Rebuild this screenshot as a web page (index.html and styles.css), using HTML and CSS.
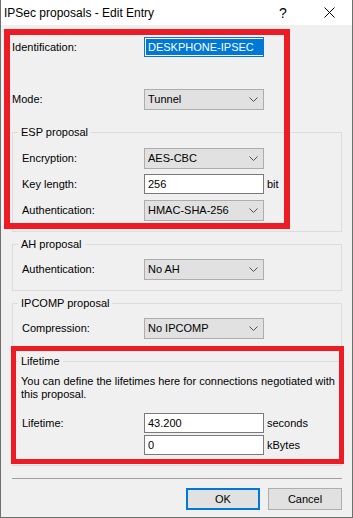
FILE: index.html
```html
<!DOCTYPE html>
<html lang="en">
<head>
  <meta charset="UTF-8">
  <title>IPSec proposals - Edit Entry</title>
  <link rel="stylesheet" href="styles.css">
</head>
<body>
  <div class="window">
    <!-- Barra de título -->
    <div class="titlebar">
      <span class="title">IPSec proposals - Edit Entry</span>
      <span class="tb-btn help">?</span>
      <span class="tb-btn close">
        <svg width="11" height="11" viewBox="0 0 11 11"><path d="M0.5 0.5 L10.5 10.5 M10.5 0.5 L0.5 10.5" stroke="#000" stroke-width="1" fill="none"/></svg>
      </span>
    </div>

    <div class="content">
      <div class="row row-ident">
        <span class="label wide">Identification:</span>
        <div class="edit focused"><span class="selected">DESKPHONE-IPSEC</span></div>
      </div>

      <div class="row row-mode">
        <span class="label wide">Mode:</span>
        <div class="combo">Tunnel<svg class="chev" width="9" height="5" viewBox="0 0 9 5"><path d="M0.5 0.5 L4.5 4.5 L8.5 0.5" stroke="#505050" fill="none"/></svg></div>
      </div>

      <!-- ESP -->
      <fieldset class="group esp">
        <legend>ESP proposal</legend>
        <div class="rows">
          <div class="row">
            <span class="label">Encryption:</span>
            <div class="combo">AES-CBC<svg class="chev" width="9" height="5" viewBox="0 0 9 5"><path d="M0.5 0.5 L4.5 4.5 L8.5 0.5" stroke="#505050" fill="none"/></svg></div>
          </div>
          <div class="row">
            <span class="label">Key length:</span>
            <div class="edit">256</div>
            <span class="unit">bit</span>
          </div>
          <div class="row">
            <span class="label">Authentication:</span>
            <div class="combo">HMAC-SHA-256<svg class="chev" width="9" height="5" viewBox="0 0 9 5"><path d="M0.5 0.5 L4.5 4.5 L8.5 0.5" stroke="#505050" fill="none"/></svg></div>
          </div>
        </div>
      </fieldset>

      <!-- AH -->
      <fieldset class="group">
        <legend>AH proposal</legend>
        <div class="rows">
          <div class="row">
            <span class="label">Authentication:</span>
            <div class="combo">No AH<svg class="chev" width="9" height="5" viewBox="0 0 9 5"><path d="M0.5 0.5 L4.5 4.5 L8.5 0.5" stroke="#505050" fill="none"/></svg></div>
          </div>
        </div>
      </fieldset>

      <!-- IPCOMP -->
      <fieldset class="group">
        <legend>IPCOMP proposal</legend>
        <div class="rows">
          <div class="row">
            <span class="label">Compression:</span>
            <div class="combo">No IPCOMP<svg class="chev" width="9" height="5" viewBox="0 0 9 5"><path d="M0.5 0.5 L4.5 4.5 L8.5 0.5" stroke="#505050" fill="none"/></svg></div>
          </div>
        </div>
      </fieldset>

      <!-- Lifetime -->
      <fieldset class="group lifetime">
        <legend>Lifetime</legend>
        <p class="note">You can define the lifetimes here for connections negotiated with this proposal.</p>
        <div class="rows tight">
          <div class="row">
            <span class="label">Lifetime:</span>
            <div class="edit">43.200</div>
            <span class="unit">seconds</span>
          </div>
          <div class="row">
            <span class="label"></span>
            <div class="edit">0</div>
            <span class="unit">kBytes</span>
          </div>
        </div>
      </fieldset>

      <div class="separator"></div>

      <div class="buttons">
        <button class="btn default">OK</button>
        <button class="btn">Cancel</button>
      </div>
    </div>

    <!-- marcas rojas encima del diálogo -->
    <div class="mark mark-top"></div>
    <div class="mark mark-bottom"></div>
  </div>
</body>
</html>
```

FILE: styles.css
```css
/* ----- GENERAL ----- */
body {
  margin: 0;
  font-family: "Liberation Sans", Arial, sans-serif;
  font-size: 11px;
  color: #000;
  background: #fff;
}

.window {
  position: relative;
  width: 353px;
  height: 518px;
  box-sizing: border-box;
  background: #f0f0f0;
  border: 1px solid #6f6f6f;
  border-top: 0;
  display: flex;
  flex-direction: column;
}

/* ----- TITLE BAR ----- */
.titlebar {
  height: 25px;
  background: #fff;
  display: flex;
  align-items: center;
  padding-left: 3px;
}

.title {
  flex: 1;
  font-size: 12px;
}

.tb-btn {
  width: 46px;
  height: 25px;
  display: flex;
  align-items: center;
  justify-content: center;
}

.help {
  font-size: 14px;
}

/* ----- CONTENT ----- */
.content {
  flex: 1;
  display: flex;
  flex-direction: column;
  padding: 12px 10px 0 11px;
}

.row {
  display: flex;
  align-items: flex-start;
  height: 21px;
}

.label {
  width: 122px;
  line-height: 21px;
  padding-left: 4px;
}

.label.wide {
  width: 132px;
  padding-left: 0;
}

.row-ident {
  height: 20px;
}

.row-ident .label {
  line-height: 20px;
}

.row-mode {
  margin-top: 32px;
}

.edit {
  width: 120px;
  height: 20px;
  box-sizing: border-box;
  border: 1px solid #7a7a7a;
  background: #fff;
  padding-left: 3px;
  line-height: 18px;
}

.edit.focused {
  border-color: #0078d7;
  padding-left: 1px;
  line-height: 16px;
  padding-top: 1px;
}

.selected {
  display: block;
  background: #0078d7;
  color: #fff;
  padding-left: 2px;
}

.combo {
  width: 120px;
  height: 21px;
  box-sizing: border-box;
  border: 1px solid #adadad;
  background: #e1e1e1;
  padding-left: 3px;
  padding-right: 5px;
  line-height: 19px;
  display: flex;
  justify-content: space-between;
  align-items: center;
}

.unit {
  line-height: 20px;
  padding-left: 3px;
}

/* ----- GROUP BOXES ----- */
.group {
  margin: 5px 0 0;
  border: 1px solid #dcdcdc;
  padding: 8px 0 10px 5px;
}

.group legend {
  padding: 0 3px;
  line-height: 14px;
}

.esp {
  margin-top: 15px;
  padding-top: 9px;
}

.rows {
  display: flex;
  flex-direction: column;
  gap: 5px;
}

.rows.tight {
  gap: 1px;
  margin-top: 12px;
}

.lifetime {
  margin-top: 4px;
  padding-top: 7px;
  padding-bottom: 9px;
}

.note {
  margin: 0;
  padding-left: 3px;
  line-height: 13px;
}

/* ----- BUTTONS ----- */
.separator {
  margin-top: 12px;
  height: 1px;
  background: #a0a0a0;
}

.buttons {
  display: flex;
  justify-content: flex-end;
  gap: 8px;
  margin-top: 9px;
}

.btn {
  width: 74px;
  height: 22px;
  box-sizing: border-box;
  border: 1px solid #adadad;
  background: #e1e1e1;
  font-family: inherit;
  font-size: 11px;
  padding: 0;
}

.btn.default {
  border: 2px solid #0078d7;
}

/* ----- RED MARKS ----- */
.mark {
  position: absolute;
  box-sizing: border-box;
  border: 6px solid #ed1c24;
}

.mark-top {
  left: 3px;
  top: 29px;
  width: 286px;
  height: 200px;
}

.mark-bottom {
  left: 10px;
  top: 346px;
  width: 333px;
  height: 118px;
  border-width: 5px;
}
```
